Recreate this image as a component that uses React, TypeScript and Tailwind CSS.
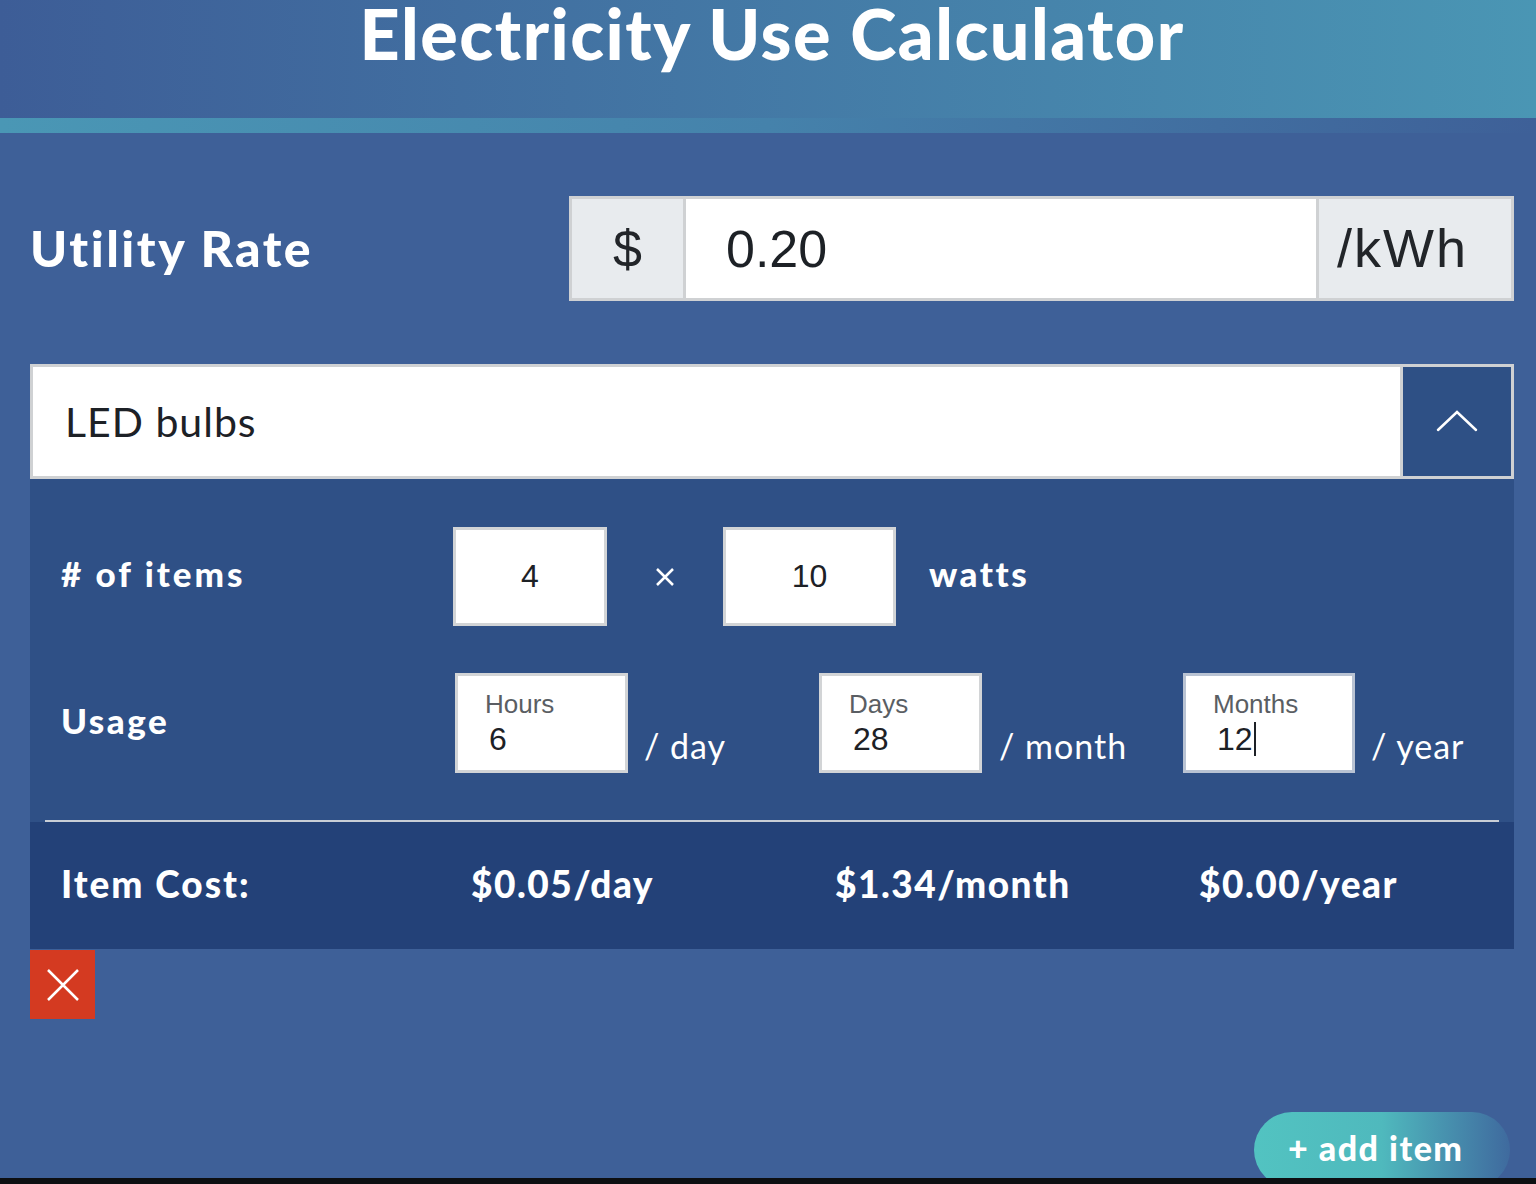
import { useState } from 'react';

const heading = "font-['Lato','Noto_Sans',sans-serif]";
const plain = "font-['Liberation_Sans','Arial',sans-serif]";

function BoxInput({ label, value, width, focused }: { label: string; value: string; width: string; focused?: boolean }) {
  return (
    <div className={`${width} shrink-0 h-[100px] bg-white border-[3px] ${focused ? 'border-[#b9c3d3]' : 'border-[#d2d4d6]'} pl-[27px] pt-[13px]`}>
      <div className={`${plain} text-[26px] leading-[30px] text-[#5a5e63]`}>{label}</div>
      <div className={`${plain} text-[32px] leading-[40px] text-[#1d2126] pl-[4px] flex items-center`}>
        {value}
        {focused && <span className="inline-block w-[2px] h-[34px] bg-[#1d2126] ml-[1px]" />}
      </div>
    </div>
  );
}

export default function App() {
  const [rate, setRate] = useState('0.20');
  const [count, setCount] = useState('4');
  const [watts, setWatts] = useState('10');

  return (
    <div className="h-[1184px] w-[1536px] flex flex-col overflow-hidden bg-[#3e6098]">
      {/* Header */}
      <div className="h-[118px] shrink-0 bg-gradient-to-r from-[#3d5d97] to-[#4a96b4] flex justify-center">
        <h1 className={`${heading} font-black text-white text-[70px] leading-[72px] tracking-[1.5px] -mt-[3px] ml-[8px]`}>
          Electricity Use Calculator
        </h1>
      </div>
      <div className="h-[15px] shrink-0 bg-gradient-to-r from-[#4a97b5] via-[#4582ab] to-[#3e6098]" />

      {/* Content */}
      <div className="flex-1 overflow-hidden pl-[30px] pr-[22px]">
        {/* Utility rate */}
        <div className="mt-[63px] flex items-center justify-between">
          <h2 className={`${heading} font-black text-white text-[50px] tracking-[2.5px]`}>Utility Rate</h2>
          <div className="w-[945px] h-[105px] flex border-[3px] border-[#cfd1d3] bg-[#cfd1d3]">
            <div className={`${plain} w-[111px] shrink-0 bg-[#e8ebee] flex items-center justify-center text-[52px] text-[#222529]`}>$</div>
            <input
              value={rate}
              onChange={e => setRate(e.target.value)}
              className={`${plain} flex-1 min-w-0 mx-[3px] bg-white pl-[40px] text-[52px] text-[#1d2126] outline-none`}
            />
            <div className={`${plain} w-[192px] shrink-0 bg-[#e8ebee] flex items-center pl-[18px] text-[54px] tracking-[2px] text-[#222529]`}>/kWh</div>
          </div>
        </div>

        {/* Item dropdown */}
        <div className="mt-[63px] h-[115px] flex border-[3px] border-[#cfd1d3] bg-[#cfd1d3]">
          <div className={`${heading} flex-1 bg-white flex items-center pl-[32px] text-[41px] tracking-[1px] text-[#1d2126]`}>LED bulbs</div>
          <button className="w-[108px] shrink-0 ml-[3px] bg-[#2e5085] flex items-center justify-center">
            <svg width="44" height="28" viewBox="0 0 44 28" fill="none" stroke="white" strokeWidth={2.5} strokeLinecap="round">
              <path d="M3 22 L22 4 L41 22" />
            </svg>
          </button>
        </div>

        {/* Item panel */}
        <div className="bg-[#2f5086]">
          <div className="pt-[48px] pl-[31px] flex items-center">
            <div className={`${heading} font-black text-white text-[35px] tracking-[3px] w-[392px] shrink-0 -mt-[6px]`}># of items</div>
            <input
              value={count}
              onChange={e => setCount(e.target.value)}
              className={`${plain} w-[154px] h-[99px] shrink-0 bg-white border-[3px] border-[#d2d4d6] text-center text-[32px] text-[#1d2126] outline-none`}
            />
            <span className="w-[116px] shrink-0 flex justify-center">
              <svg width="22" height="22" viewBox="0 0 22 22" stroke="white" strokeWidth={2.5}>
                <path d="M3 3 L19 19 M19 3 L3 19" />
              </svg>
            </span>
            <input
              value={watts}
              onChange={e => setWatts(e.target.value)}
              className={`${plain} w-[173px] h-[99px] shrink-0 bg-white border-[3px] border-[#d2d4d6] text-center text-[32px] text-[#1d2126] outline-none`}
            />
            <span className={`${heading} font-black text-white text-[35px] tracking-[2.5px] ml-[33px] -mt-[6px]`}>watts</span>
          </div>

          <div className="pt-[47px] pl-[31px] flex items-center">
            <div className={`${heading} font-black text-white text-[35px] tracking-[2.5px] w-[394px] shrink-0 -mt-[6px]`}>Usage</div>
            <div className="w-[364px] shrink-0 flex items-end">
              <BoxInput label="Hours" value="6" width="w-[173px]" />
              <span className={`${heading} text-white text-[34px] tracking-[1px] ml-[16px] mb-[2px]`}>/ day</span>
            </div>
            <div className="w-[364px] shrink-0 flex items-end">
              <BoxInput label="Days" value="28" width="w-[163px]" />
              <span className={`${heading} text-white text-[34px] tracking-[1px] ml-[17px] mb-[2px]`}>/ month</span>
            </div>
            <div className="flex-1 flex items-end">
              <BoxInput label="Months" value="12" width="w-[172px]" focused />
              <span className={`${heading} text-white text-[34px] tracking-[1px] ml-[16px] mb-[2px]`}>/ year</span>
            </div>
          </div>

          <div className="mt-[47px] mx-[15px] h-[2px] bg-[#c9ced6]" />

          <div className="h-[127px] bg-[#234178] pl-[31px] flex items-center">
            <div className={`${heading} font-black text-white text-[37px] tracking-[2px] w-[410px] shrink-0 -mt-[4px]`}>Item Cost:</div>
            <div className={`${heading} font-black text-white text-[37px] tracking-[1.5px] w-[364px] shrink-0 -mt-[4px]`}>$0.05/day</div>
            <div className={`${heading} font-black text-white text-[37px] tracking-[1.5px] w-[364px] shrink-0 -mt-[4px]`}>$1.34/month</div>
            <div className={`${heading} font-black text-white text-[37px] tracking-[1.5px] -mt-[4px]`}>$0.00/year</div>
          </div>
        </div>

        {/* Remove item */}
        <button className="mt-[1px] w-[65px] h-[69px] bg-[#d43a21] flex items-center justify-center">
          <svg width="34" height="34" viewBox="0 0 34 34" stroke="white" strokeWidth={2.5}>
            <path d="M2 2 L32 32 M32 2 L2 32" />
          </svg>
        </button>

        {/* Add item */}
        <div className="mt-[93px] flex justify-end pr-[4px]">
          <button className={`${heading} font-black w-[256px] h-[76px] rounded-full bg-gradient-to-r from-[#52c3c1] via-[#4fb9bd] to-[#3f6a9e] text-white text-[34px] tracking-[1.5px] text-left pl-[34px] pb-[5px]`}>
            + add item
          </button>
        </div>
      </div>
      <div className="h-[6px] shrink-0 bg-[#0d0f12]" />
    </div>
  );
}
